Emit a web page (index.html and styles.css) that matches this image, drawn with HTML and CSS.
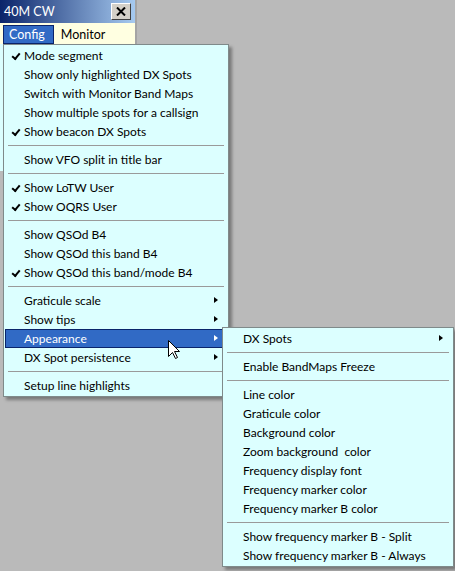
FILE: index.html
```html
<!DOCTYPE html>
<html>
<head>
<meta charset="utf-8">
<link rel="stylesheet" href="styles.css">
</head>
<body>
<div class="desk">
  <div class="win">
    <div class="titlebar">
      <span class="title">40M CW</span>
      <span class="close"><svg width="10" height="9" viewBox="0 0 10 9"><path d="M1 0.5 L9 8.5 M9 0.5 L1 8.5" stroke="#000" stroke-width="2"/></svg></span>
    </div>
    <div class="menubar">
      <span class="mb-item active">Config</span>
      <span class="mb-item">Monitor</span>
    </div>
    <div class="winbody"></div>
  </div>

  <div class="menu main-menu">
    <div class="item checked">Mode segment</div>
    <div class="item">Show only highlighted DX Spots</div>
    <div class="item">Switch with Monitor Band Maps</div>
    <div class="item">Show multiple spots for a callsign</div>
    <div class="item checked">Show beacon DX Spots</div>
    <div class="sep"></div>
    <div class="item">Show VFO split in title bar</div>
    <div class="sep"></div>
    <div class="item checked">Show LoTW User</div>
    <div class="item checked">Show OQRS User</div>
    <div class="sep"></div>
    <div class="item">Show QSOd B4</div>
    <div class="item">Show QSOd this band B4</div>
    <div class="item checked">Show QSOd this band/mode B4</div>
    <div class="sep"></div>
    <div class="item sub">Graticule scale</div>
    <div class="item sub">Show tips</div>
    <div class="item sub hot">Appearance</div>
    <div class="item sub">DX Spot persistence</div>
    <div class="sep"></div>
    <div class="item">Setup line highlights</div>
  </div>

  <div class="menu sub-menu">
    <div class="item sub">DX Spots</div>
    <div class="sep"></div>
    <div class="item">Enable BandMaps Freeze</div>
    <div class="sep"></div>
    <div class="item">Line color</div>
    <div class="item">Graticule color</div>
    <div class="item">Background color</div>
    <div class="item">Zoom background&nbsp; color</div>
    <div class="item">Frequency display font</div>
    <div class="item">Frequency marker color</div>
    <div class="item">Frequency marker B color</div>
    <div class="sep"></div>
    <div class="item">Show frequency marker B - Split</div>
    <div class="item">Show frequency marker B - Always</div>
  </div>

  <svg class="cursor" width="13" height="20" viewBox="0 0 13 20">
    <path d="M0.5 0.5 L0.5 16.5 L4.5 12.5 L7.5 18.5 L9.5 17.5 L6.5 11.5 L11.5 11.5 Z" fill="#fff" stroke="#000" stroke-width="1"/>
  </svg>
</div>
</body>
</html>
```

FILE: styles.css
```css
html, body {
  margin: 0;
  padding: 0;
}
body {
  background: #bababa;
  font-family: "Lato", "Open Sans", sans-serif;
  font-size: 12px;
  color: #000;
}
.desk {
  position: relative;
  width: 455px;
  height: 571px;
  overflow: hidden;
}
.win {
  width: 135px;
  border-right: 2px solid #a4a4a4;
}
.titlebar {
  height: 23px;
  box-sizing: border-box;
  display: flex;
  align-items: center;
  justify-content: space-between;
  padding: 0 4px 0 4px;
  background: linear-gradient(to right, #0a246a, #a6caf0);
}
.title {
  color: #fff;
  font-size: 12.5px;
}
.close {
  width: 20px;
  height: 17px;
  box-sizing: border-box;
  background: #d4d0c8;
  border: 1px solid;
  border-color: #fff #404040 #404040 #fff;
  display: flex;
  align-items: center;
  justify-content: center;
}
.menubar {
  background: #ffffe1;
  display: flex;
  align-items: stretch;
  padding: 2px 0 0 3px;
  box-sizing: border-box;
  height: 21px;
}
.mb-item {
  display: flex;
  align-items: center;
  padding: 0 7px;
  font-size: 12.5px;
}
.mb-item.active {
  background: #316ac5;
  color: #fff;
  border: 1px solid #0a246a;
  padding: 0 8px 0 5px;
}
.winbody {
  height: 127px;
  background: #dcffff;
}
.menu {
  position: absolute;
  background: #dcffff;
  border: 1px solid #7f8a8a;
  padding: 1px;
  box-shadow: 3px 3px 3px rgba(0,0,0,0.35);
}
.main-menu {
  left: 3px;
  top: 44px;
  width: 222px;
}
.sub-menu {
  left: 222px;
  top: 327px;
  width: 228px;
}
.item {
  position: relative;
  height: 19px;
  line-height: 20px;
  padding-left: 19px;
  white-space: nowrap;
}
.item.checked::before {
  content: "";
  position: absolute;
  left: 7px;
  top: 7px;
  width: 6px;
  height: 3px;
  border-left: 2px solid #000;
  border-bottom: 2px solid #000;
  transform: rotate(-50deg);
}
.item.sub::after {
  content: "";
  position: absolute;
  right: 9px;
  top: 6px;
  border-left: 4px solid #000;
  border-top: 3.5px solid transparent;
  border-bottom: 3.5px solid transparent;
}
.item.hot {
  background: #316ac5;
  color: #fff;
  box-shadow: inset 0 0 0 1px #0a246a;
}
.item.hot::after {
  border-left-color: #fff;
}
.sep {
  height: 9px;
  position: relative;
}
.sep::after {
  content: "";
  position: absolute;
  left: 3px;
  right: 3px;
  top: 4px;
  height: 1px;
  background: #9a9a9a;
}
.cursor {
  position: absolute;
  left: 168px;
  top: 340px;
}
```
